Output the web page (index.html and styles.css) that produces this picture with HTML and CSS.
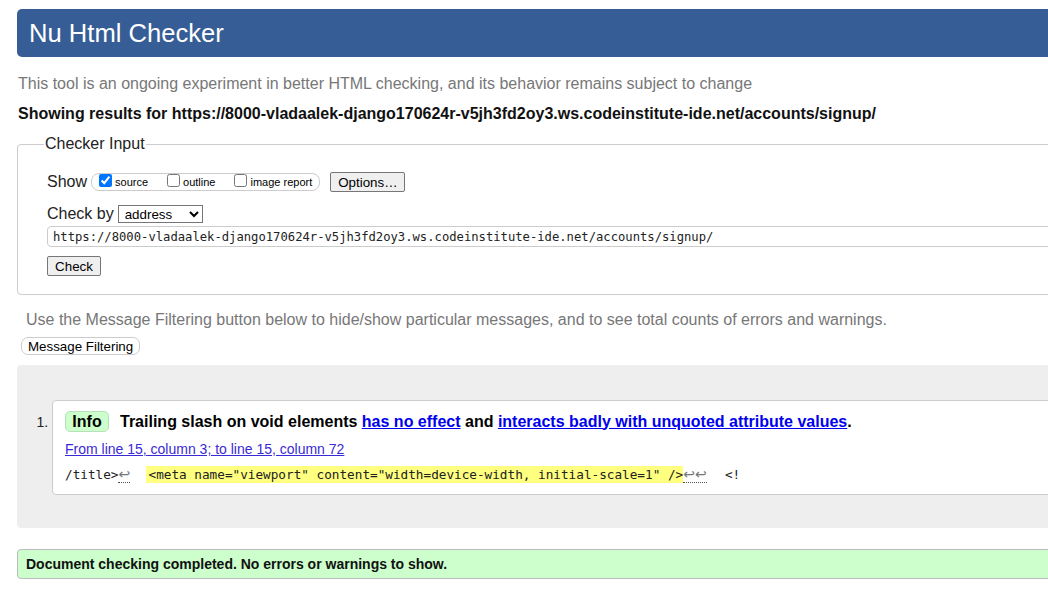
FILE: index.html
```html
<!DOCTYPE html>
<html lang="en">
<head>
<meta charset="utf-8">
<title>Nu Html Checker</title>
<link rel="stylesheet" href="styles.css">
</head>
<body>
<div class="page">
  <header class="banner"><h1 class="title">Nu Html Checker</h1></header>
  <p class="intro">This tool is an ongoing experiment in better HTML checking, and its behavior remains subject to change</p>
  <p class="showing">Showing results for https://8000-vladaalek-django170624r-v5jh3fd2oy3.ws.codeinstitute-ide.net/accounts/signup/</p>

  <fieldset class="checker">
    <legend class="legend">Checker Input</legend>
    <div class="row show-row">
      <span class="lbl">Show</span>
      <span class="opts">
        <label class="opt"><input type="checkbox" checked class="cb">source</label>
        <label class="opt"><input type="checkbox" class="cb">outline</label>
        <label class="opt"><input type="checkbox" class="cb">image report</label>
      </span>
      <button class="btn options-btn" type="button">Options…</button>
    </div>
    <div class="row checkby-row">
      <span class="lbl">Check by</span>
      <select class="sel"><option>address</option></select>
    </div>
    <input class="url" type="text" value="https://8000-vladaalek-django170624r-v5jh3fd2oy3.ws.codeinstitute-ide.net/accounts/signup/">
    <div class="row"><button class="btn check-btn" type="button">Check</button></div>
  </fieldset>

  <p class="filter-note">Use the Message Filtering button below to hide/show particular messages, and to see total counts of errors and warnings.</p>
  <button class="filter-btn" type="button">Message Filtering</button>

  <div class="results">
    <ol class="msgs">
      <li class="msg">
        <p class="msg-head"><span class="badge">Info</span><span class="msg-text">Trailing slash on void elements <a href="#" class="lnk">has no effect</a> and <a href="#" class="lnk">interacts badly with unquoted attribute values</a>.</span></p>
        <p class="loc"><a href="#" class="loc-link">From line 15, column 3; to line 15, column 72</a></p>
        <p class="code">/title&gt;<span class="lf">↩</span>  <mark class="hl">&lt;meta name="viewport" content="width=device-width, initial-scale=1" /&gt;</mark><span class="lf">↩↩</span>  <span class="tail">&lt;!</span></p>
      </li>
    </ol>
  </div>

  <div class="success">Document checking completed. No errors or warnings to show.</div>
</div>
</body>
</html>
```

FILE: styles.css
```css
html, body {
  margin: 0;
  padding: 0;
  overflow: hidden;
  background: #fff;
}
body {
  font-family: "Liberation Sans", Arial, sans-serif;
  font-size: 16px;
  color: #000;
}
.page {
  width: 1090px;
  margin-left: 17px;
  padding-top: 9px;
}
.banner {
  height: 48px;
  background: #365d95;
  border-radius: 5px 0 0 5px;
  display: flex;
  align-items: center;
}
.title {
  margin: 0 0 0 12px;
  font-size: 25.6px;
  font-weight: normal;
  color: #fff;
  line-height: 30px;
}
.intro {
  margin: 17px 0 0 1px;
  line-height: 20px;
  color: #777;
}
.showing {
  margin: 10px 0 0 1px;
  line-height: 20px;
  font-weight: bold;
  color: #111;
}
.checker {
  margin: 10px 0 0 0;
  border: 1px solid #ccc;
  border-radius: 4px;
  padding: 6px 0 18px 29px;
  min-width: 0;
}
.legend {
  padding: 0 1px;
  margin-left: -3px;
  line-height: 20px;
  color: #222;
}
.row {
  display: flex;
  align-items: center;
}
.lbl {
  color: #222;
  line-height: 20px;
}
.show-row {
  margin-top: 12px;
  height: 20px;
}
.opts {
  display: flex;
  align-items: center;
  margin-left: 4px;
  height: 16px;
  border: 1px solid #ccc;
  border-radius: 8px;
  padding: 0 7px 0 4px;
  font-size: 11px;
}
.opt {
  display: flex;
  align-items: center;
  margin-right: 16px;
}
.opt:last-child {
  margin-right: 0;
}
.cb {
  width: 13px;
  height: 13px;
  margin: 0 3px 3px 3px;
}
.btn {
  font-family: "Liberation Sans", Arial, sans-serif;
  font-size: 13.33px;
  background: #efefef;
  border: 1px solid #767676;
  border-radius: 2px;
  color: #000;
  padding: 0 7px;
}
.options-btn {
  margin-left: 10px;
  height: 20px;
  width: 75px;
}
.checkby-row {
  margin-top: 12px;
}
.sel {
  margin-left: 4px;
  width: 85px;
  height: 18px;
  font-family: "Liberation Sans", Arial, sans-serif;
  font-size: 13.33px;
  border: 1px solid #767676;
  border-radius: 0;
  background: #fff;
  padding: 0 0 0 2px;
}
.url {
  display: block;
  box-sizing: border-box;
  margin-top: 2px;
  width: 1040px;
  height: 21px;
  border: 1px solid #ccc;
  border-radius: 4px;
  padding: 0 5px;
  font-family: "DejaVu Sans Mono", "Liberation Mono", monospace;
  font-size: 12.2px;
  color: #222;
  outline: none;
}
.check-btn {
  margin-top: 9px;
  height: 20px;
  width: 54px;
  padding: 0;
}
.filter-note {
  margin: 15px 0 0 9px;
  line-height: 20px;
  color: #777;
}
.filter-btn {
  display: block;
  margin: 7px 0 0 4px;
  height: 18px;
  padding: 0 6px;
  background: #fff;
  border: 1px solid #ccc;
  border-radius: 7px;
  font-family: "Liberation Sans", Arial, sans-serif;
  font-size: 13.33px;
  color: #000;
}
.results {
  margin-top: 10px;
  background: #eee;
  border-radius: 4px;
  padding: 35px 0 33px 0;
}
.msgs {
  margin: 0;
  padding: 0 0 0 35px;
  font-size: 14px;
}
.msg {
  background: #fff;
  border: 1px solid #ccc;
  border-radius: 4px 0 0 4px;
  padding: 10px 0 10px 12px;
  font-size: 16px;
}
.msg::marker {
  font-size: 14px;
  color: #222;
}
.msg-head {
  margin: 0;
  display: flex;
  align-items: center;
  line-height: 20px;
}
.badge {
  box-sizing: border-box;
  height: 21px;
  width: 44px;
  display: inline-flex;
  align-items: center;
  justify-content: center;
  background: #ccffcc;
  border: 1px solid #b8e0b8;
  border-radius: 5px;
  font-weight: bold;
  margin-right: 11px;
}
.msg-text {
  font-weight: bold;
}
.lnk {
  color: #0000ee;
}
.loc {
  margin: 8px 0 0 0;
  font-size: 14px;
  line-height: 18px;
}
.loc-link {
  color: #3a2ad6;
}
.code {
  margin: 8px 0 0 0;
  height: 18px;
  font-family: "DejaVu Sans Mono", "Liberation Mono", monospace;
  font-size: 12.7px;
  line-height: 18px;
  white-space: pre;
  color: #222;
}
.lf {
  font-family: "DejaVu Sans", sans-serif;
  font-size: 14px;
  line-height: 12px;
  color: #777;
  border-bottom: 1px dotted #555;
}
.tail {
  margin-left: 3px;
}
.hl {
  background: #ffff80;
  color: #222;
  margin-left: 0;
  padding: 1px 0 1px 3px;
}
.success {
  margin-top: 21px;
  box-sizing: border-box;
  height: 30px;
  display: flex;
  align-items: center;
  padding-left: 8px;
  background: #ccffcc;
  border: 1px solid #bbb;
  border-radius: 4px 0 0 4px;
  font-size: 14px;
  font-weight: bold;
  color: #111;
}
```
